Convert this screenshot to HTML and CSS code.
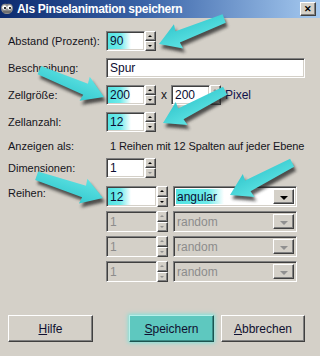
FILE: index.html
```
<!DOCTYPE html>
<html lang="de">
<head>
  <meta charset="UTF-8">
  <title>Als Pinselanimation speichern</title>
  <link rel="stylesheet" href="styles.css">
</head>
<body>
  <div class="dialog">
    <header class="titlebar">
      <svg class="app-icon" width="14" height="14" viewBox="0 0 14 14">
        <path d="M1 6 C1 2 4 1 7 2 C10 1 13 2 13 6 C13 10 10 12 7 12 C4 12 1 10 1 6 Z" fill="#8c8c8c"/>
        <circle cx="4.5" cy="5.5" r="2.3" fill="#fff"/>
        <circle cx="9.5" cy="5.5" r="2.3" fill="#fff"/>
        <circle cx="5" cy="6" r="1.1" fill="#000"/>
        <circle cx="10" cy="6" r="1.1" fill="#000"/>
        <path d="M3 10 L11 10" stroke="#555" stroke-width="1"/>
      </svg>
      <span class="title">Als Pinselanimation speichern</span>
      <span class="close">&#x2715;</span>
    </header>

    <main class="content">
      <div class="row first">
        <span class="label">Abstand (Prozent):</span>
        <div class="spin">
          <div class="field hl">90</div>
          <div class="spin-btns"><span class="up"></span><span class="down"></span></div>
        </div>
      </div>

      <div class="row">
        <span class="label">Beschreibung:</span>
        <div class="field entry">Spur</div>
      </div>

      <div class="row">
        <span class="label">Zellgröße:</span>
        <div class="spin">
          <div class="field hl">200</div>
          <div class="spin-btns"><span class="up"></span><span class="down"></span></div>
        </div>
        <span class="times">x</span>
        <div class="spin">
          <div class="field">200</div>
          <div class="spin-btns"><span class="up off"></span><span class="down"></span></div>
        </div>
        <span class="unit">Pixel</span>
      </div>

      <div class="row">
        <span class="label">Zellanzahl:</span>
        <div class="spin">
          <div class="field hl">12</div>
          <div class="spin-btns"><span class="up"></span><span class="down"></span></div>
        </div>
      </div>

      <div class="row info">
        <span class="label">Anzeigen als:</span>
        <span class="value">1 Reihen mit 12 Spalten auf jeder Ebene</span>
      </div>

      <div class="row dims">
        <span class="label">Dimensionen:</span>
        <div class="spin">
          <div class="field">1</div>
          <div class="spin-btns"><span class="up"></span><span class="down off"></span></div>
        </div>
      </div>

      <div class="rows-block">
        <span class="label">Reihen:</span>
        <div class="rank-list">
          <div class="rank">
            <div class="spin wide">
              <div class="field hl">12</div>
              <div class="spin-btns"><span class="up"></span><span class="down"></span></div>
            </div>
            <div class="combo">
              <span class="combo-text hl-combo">angular</span>
              <span class="combo-btn"></span>
            </div>
          </div>
          <div class="rank disabled">
            <div class="spin wide">
              <div class="field">1</div>
              <div class="spin-btns"><span class="up off"></span><span class="down off"></span></div>
            </div>
            <div class="combo">
              <span class="combo-text">random</span>
              <span class="combo-btn"></span>
            </div>
          </div>
          <div class="rank disabled">
            <div class="spin wide">
              <div class="field">1</div>
              <div class="spin-btns"><span class="up off"></span><span class="down off"></span></div>
            </div>
            <div class="combo">
              <span class="combo-text">random</span>
              <span class="combo-btn"></span>
            </div>
          </div>
          <div class="rank disabled">
            <div class="spin wide">
              <div class="field">1</div>
              <div class="spin-btns"><span class="up off"></span><span class="down off"></span></div>
            </div>
            <div class="combo">
              <span class="combo-text">random</span>
              <span class="combo-btn"></span>
            </div>
          </div>
        </div>
      </div>

      <div class="buttons">
        <button class="btn"><u>H</u>ilfe</button>
        <button class="btn primary"><u>S</u>peichern</button>
        <button class="btn"><u>A</u>bbrechen</button>
      </div>
    </main>

    <!-- the cyan pointer arrows lie over the dialog -->
    <svg class="arrows" width="320" height="356" viewBox="0 0 320 356">
      <defs>
        <linearGradient id="cyan" x1="0" y1="-1" x2="0" y2="1">
          <stop offset="0" stop-color="#8ff3f3"/>
          <stop offset="0.5" stop-color="#5ee3e3"/>
          <stop offset="1" stop-color="#36c9cf"/>
        </linearGradient>
        <filter id="blur" x="-20%" y="-50%" width="140%" height="200%">
          <feGaussianBlur stdDeviation="1.8"/>
        </filter>
        <g id="arrow-shadow">
          <polygon points="-70,-4 -20,-6 -21,-13 0,0 -21,13 -20,6 -70,5" fill="#222" opacity="0.75" filter="url(#blur)"/>
        </g>
        <g id="arrow">
          <polygon points="-70,-4 -20,-6 -21,-13 0,0 -21,13 -20,6 -70,5" fill="url(#cyan)"/>
        </g>
      </defs>
      <g transform="translate(2,4)">
        <use href="#arrow-shadow" transform="translate(159,44) rotate(159)"/>
        <use href="#arrow-shadow" transform="translate(104,97) rotate(23)"/>
        <use href="#arrow-shadow" transform="translate(163,123) rotate(153)"/>
        <use href="#arrow-shadow" transform="translate(103,198) rotate(19)"/>
        <use href="#arrow-shadow" transform="translate(230,195) rotate(153)"/>
      </g>
      <use href="#arrow" transform="translate(159,44) rotate(159)"/>
      <use href="#arrow" transform="translate(104,97) rotate(23)"/>
      <use href="#arrow" transform="translate(163,123) rotate(153)"/>
      <use href="#arrow" transform="translate(103,198) rotate(19)"/>
      <use href="#arrow" transform="translate(230,195) rotate(153)"/>
    </svg>
  </div>
</body>
</html>
```

FILE: styles.css
```
* {
  padding: 0;
  margin: 0;
  box-sizing: border-box;
}

body {
  width: 320px;
  height: 356px;
  background-color: #d4d0c8;
  font-family: 'Liberation Sans', Arial, sans-serif;
  font-size: 11px;
  color: #141420;
}

.dialog {
  width: 320px;
  height: 356px;
  position: relative;
  background-color: #d4d0c8;
  overflow: hidden;
}

.titlebar {
  height: 18px;
  display: flex;
  align-items: center;
  background: linear-gradient(90deg, #0c2a6e 0%, #3a64a8 45%, #a6caf0 100%);
}

.app-icon {
  flex: none;
}

.title {
  margin-left: 3px;
  color: #fff;
  font-weight: bold;
  font-size: 12px;
  letter-spacing: -0.3px;
  flex: 1;
}

.close {
  width: 16px;
  height: 14px;
  margin-right: 4px;
  display: flex;
  align-items: center;
  justify-content: center;
  background: #d4d0c8;
  border: 1px solid;
  border-color: #fff #404040 #404040 #fff;
  box-shadow: inset -1px -1px 0 #808080;
  font-size: 9px;
  font-weight: bold;
  color: #000;
}

.content {
  padding: 0 15px 0 8px;
}

.row {
  display: flex;
  align-items: center;
  height: 20px;
  margin-top: 7px;
  white-space: nowrap;
}

.row.first {
  margin-top: 13px;
}

.row.info {
  margin-top: 4px;
}

.row.dims {
  margin-top: 2px;
}

.label {
  width: 98px;
  flex: none;
}

.value {
  padding-left: 4px;
  letter-spacing: -0.1px;
}

.field {
  height: 100%;
  background: #fff;
  border: 1px solid;
  border-color: #808080 #fff #fff #808080;
  box-shadow: inset 1px 1px 0 #404040, inset -1px -1px 0 #d4d0c8;
  padding-left: 3px;
  display: flex;
  align-items: center;
  font-size: 12px;
  color: #0c0c30;
}

.entry {
  width: 199px;
}

.hl {
  background: linear-gradient(90deg, #52e2e2 0, #6deaea 13px, #fff 24px);
}

.spin {
  display: flex;
  height: 20px;
}

.spin .field {
  width: 39px;
}

.spin.wide .field {
  width: 51px;
}

.spin-btns {
  width: 11px;
  display: flex;
  flex-direction: column;
}

.spin-btns span {
  flex: 1;
  position: relative;
  background: #d4d0c8;
  border: 1px solid;
  border-color: #fff #404040 #404040 #fff;
  box-shadow: inset -1px -1px 0 #808080;
}

.spin-btns span::after {
  content: '';
  position: absolute;
  left: 2px;
  top: 3px;
  border-left: 2px solid transparent;
  border-right: 2px solid transparent;
}

.spin-btns .up::after {
  border-bottom: 2px solid #000;
}

.spin-btns .down::after {
  border-top: 2px solid #000;
}

.spin-btns .up.off::after {
  border-bottom-color: #909090;
}

.spin-btns .down.off::after {
  border-top-color: #909090;
}

.times {
  margin: 0 4px 0 5px;
  font-size: 12px;
}

.unit {
  margin-left: 4px;
  font-size: 12px;
  color: #10104a;
}

.rows-block {
  display: flex;
  margin-top: 8px;
}

.rows-block .label {
  padding-top: 1px;
}

.rank-list {
  display: flex;
  flex-direction: column;
  gap: 4px;
}

.rank {
  display: flex;
  height: 21px;
}

.rank .spin {
  height: 21px;
}

.combo {
  width: 124px;
  margin-left: 5px;
  display: flex;
  background: #fff;
  border: 1px solid;
  border-color: #808080 #fff #fff #808080;
  box-shadow: inset 1px 1px 0 #404040, inset -1px -1px 0 #d4d0c8;
  padding: 2px;
}

.combo-text {
  flex: 1;
  padding-left: 1px;
  display: flex;
  align-items: center;
  font-size: 12px;
  color: #0c0c30;
}

.hl-combo {
  background: linear-gradient(90deg, #52e2e2 0, #6deaea 32px, #fff 48px);
}

.combo-btn {
  width: 21px;
  position: relative;
  background: #d4d0c8;
  border: 1px solid;
  border-color: #fff #404040 #404040 #fff;
  box-shadow: inset -1px -1px 0 #808080;
}

.combo-btn::after {
  content: '';
  position: absolute;
  left: 6px;
  top: 6px;
  border-left: 4px solid transparent;
  border-right: 4px solid transparent;
  border-top: 4px solid #000;
}

.disabled .field,
.disabled .combo {
  background: #d4d0c8;
  color: #8c8c8c;
}

.disabled .combo-text {
  color: #8c8c8c;
}

.disabled .combo-btn::after {
  border-top-color: #909090;
}

.buttons {
  display: flex;
  margin-top: 33px;
}

.btn {
  width: 85px;
  height: 27px;
  font-family: 'Liberation Sans', Arial, sans-serif;
  font-size: 12px;
  color: #101030;
  background: #d4d0c8;
  border: 1px solid;
  border-color: #fff #404040 #404040 #fff;
  box-shadow: inset -1px -1px 0 #808080;
}

.btn.primary {
  margin-left: 36px;
  background: #5ec8bf;
  border-color: #b8f0ea #1c5450 #1c5450 #b8f0ea;
  box-shadow: inset -1px -1px 0 #3a8c86, 0 0 4px 1px #7fe2da;
}

.btn.primary + .btn {
  margin-left: 7px;
  width: 84px;
}

.arrows {
  position: absolute;
  left: 0;
  top: 0;
  pointer-events: none;
}
```
